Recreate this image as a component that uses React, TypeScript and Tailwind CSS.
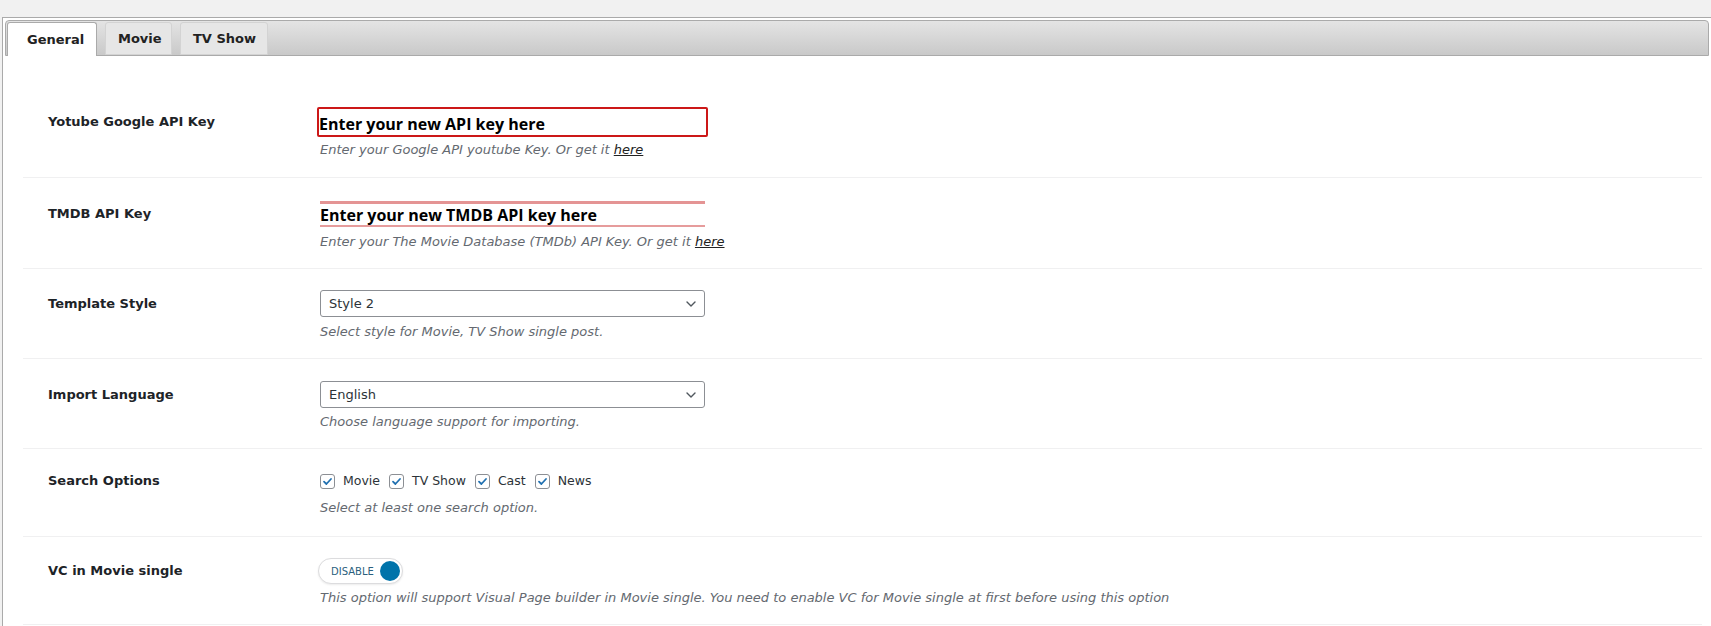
import type { ReactNode } from "react";

const tabs = [
  { name: "General", width: "w-[90px] pl-[19px]", active: true },
  { name: "Movie", width: "w-[67px] pl-[12px]", active: false },
  { name: "TV Show", width: "w-[88px] pl-[12px]", active: false },
];

function Row({
  label,
  height,
  top,
  controlHeight,
  gap,
  description,
  children,
}: {
  label: string;
  height: string;
  top: string;
  controlHeight: string;
  gap: string;
  description: ReactNode;
  children: ReactNode;
}) {
  return (
    <div
      className={`grid grid-cols-[297px_1fr] border-b border-[#f0f0f1] ${height} ${top}`}
    >
      <div
        className={`flex items-center pl-[25px] text-[13px] font-bold text-[#1d2327] ${controlHeight}`}
      >
        {label}
      </div>
      <div>
        <div className={`flex items-center ${controlHeight}`}>{children}</div>
        <p
          className={`text-[13px] leading-[16px] text-[#646970] italic ${gap}`}
        >
          {description}
        </p>
      </div>
    </div>
  );
}

function Select({ value }: { value: string }) {
  return (
    <div className="flex h-[27px] w-[385px] items-center justify-between rounded-[3px] border border-[#8c8f94] bg-white pr-[8px] pl-[8px] text-[13px] text-[#2c3338]">
      <span>{value}</span>
      <svg width="10" height="6" viewBox="0 0 10 6" fill="none">
        <path
          d="M1 1l4 4 4-4"
          stroke="#50575e"
          strokeWidth="1.4"
          strokeLinecap="round"
          strokeLinejoin="round"
        />
      </svg>
    </div>
  );
}

function Check({ label }: { label: string }) {
  return (
    <label className="mr-[9px] flex items-center gap-[8px] text-[12.5px] text-[#2c3338]">
      <span className="flex h-[15px] w-[15px] items-center justify-center rounded-[3px] border border-[#8c8f94] bg-white">
        <svg width="11" height="11" viewBox="0 0 11 11" fill="none">
          <path
            d="M2 5.6l2.4 2.4L9 3"
            stroke="#2271b1"
            strokeWidth="1.8"
            strokeLinecap="round"
            strokeLinejoin="round"
          />
        </svg>
      </span>
      {label}
    </label>
  );
}

export default function App() {
  return (
    <div className="min-h-screen bg-[#f1f1f1] pt-[17px] pl-[2px] font-['DejaVu_Sans',Verdana,sans-serif]">
      <div className="min-h-[609px] border-t border-l border-[#aaa] bg-white p-[2px]">
        <div className="flex h-[36px] items-start gap-[8px] rounded-t-[4px] border border-[#aaa] bg-gradient-to-b from-[#e4e4e4] to-[#c9c9c9] pt-[1px] pl-[1px]">
          {tabs.map((tab) => (
            <div
              key={tab.name}
              className={`flex items-center rounded-t-[3px] border text-[13px] font-bold text-[#222] ${tab.width} ${
                tab.active
                  ? "relative z-10 h-[34px] border-[#aaa] border-b-0 bg-white"
                  : "h-[33px] border-[#d3d3d3] bg-[#e6e6e6]"
              }`}
            >
              {tab.name}
            </div>
          ))}
        </div>

        <div className="pt-[28px] pr-[7px] pl-[18px]">
          <Row
            label="Yotube Google API Key"
            height="h-[94px]"
            top="pt-[23px]"
            controlHeight="h-[30px]"
            gap="mt-[5px]"
            description={
              <>
                Enter your Google API youtube Key. Or get it{" "}
                <span className="text-[#222] underline">here</span>
              </>
            }
          >
            <div className="-ml-[3px] flex h-[30px] w-[391px] items-center rounded-[2px] border-2 border-[#cc1818] pt-[3px] font-['Open_Sans',sans-serif] text-[16px] font-bold text-black">
              Enter your new API key here
            </div>
          </Row>

          <Row
            label="TMDB API Key"
            height="h-[91px]"
            top="pt-[23px]"
            controlHeight="h-[26px]"
            gap="mt-[7px]"
            description={
              <>
                Enter your The Movie Database (TMDb) API Key. Or get it{" "}
                <span className="text-[#222] underline">here</span>
              </>
            }
          >
            <div className="flex h-[26px] w-[385px] items-center border-t-[3px] border-b-2 border-t-[#e49494] border-b-[#e69c9c] font-['Open_Sans',sans-serif] text-[16px] font-bold text-black">
              Enter your new TMDB API key here
            </div>
          </Row>

          <Row
            label="Template Style"
            height="h-[90px]"
            top="pt-[21px]"
            controlHeight="h-[27px]"
            gap="mt-[7px]"
            description="Select style for Movie, TV Show single post."
          >
            <Select value="Style 2" />
          </Row>

          <Row
            label="Import Language"
            height="h-[90px]"
            top="pt-[22px]"
            controlHeight="h-[27px]"
            gap="mt-[6px]"
            description="Choose language support for importing."
          >
            <Select value="English" />
          </Row>

          <Row
            label="Search Options"
            height="h-[88px]"
            top="pt-[22px]"
            controlHeight="h-[20px]"
            gap="mt-[9px]"
            description="Select at least one search option."
          >
            <Check label="Movie" />
            <Check label="TV Show" />
            <Check label="Cast" />
            <Check label="News" />
          </Row>

          <Row
            label="VC in Movie single"
            height="h-[88px]"
            top="pt-[21px]"
            controlHeight="h-[26px]"
            gap="mt-[6px]"
            description="This option will support Visual Page builder in Movie single. You need to enable VC for Movie single at first before using this option"
          >
            <div className="-ml-[2px] flex h-[26px] w-[85px] items-center justify-between rounded-full border border-[#dcdcde] bg-white pr-[2px] pl-[12px] shadow-[0_1px_2px_rgba(0,0,0,0.08)]">
              <span className="text-[10px] text-[#2b5f7e]">DISABLE</span>
              <span className="h-[20px] w-[20px] rounded-full bg-[#0073aa]" />
            </div>
          </Row>
        </div>
      </div>
    </div>
  );
}
